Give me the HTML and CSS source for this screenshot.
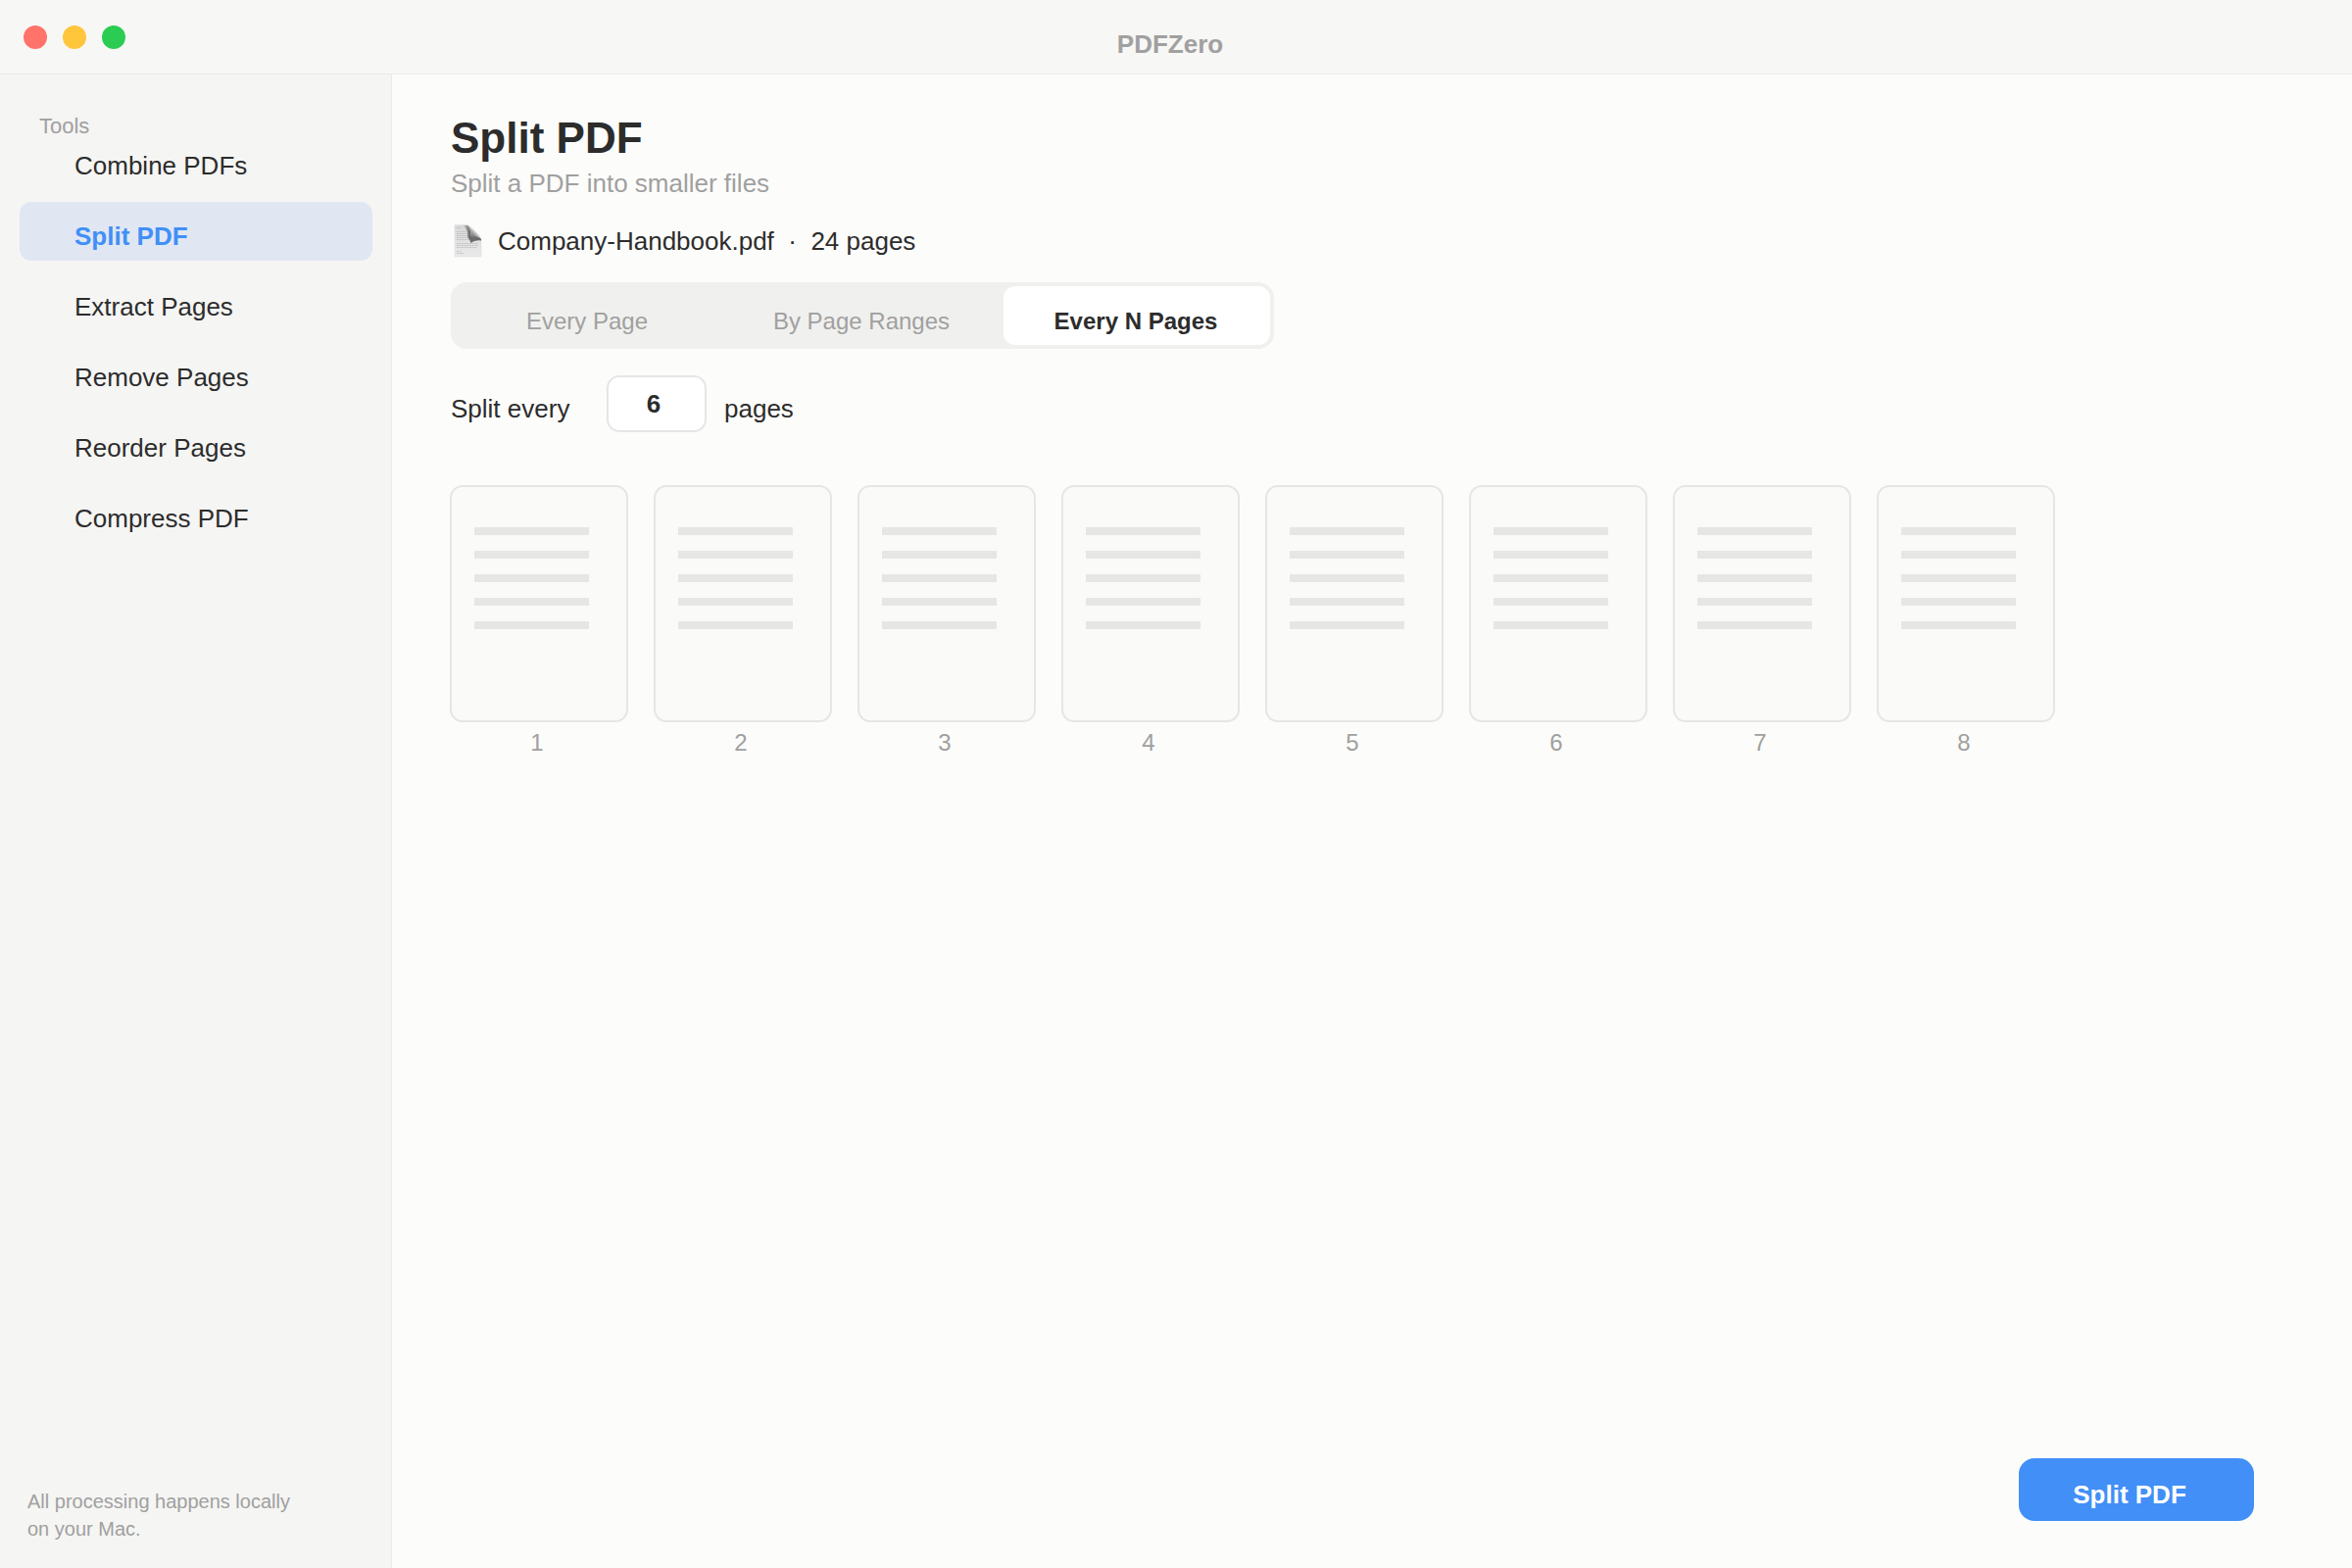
FILE: index.html
```html
<!DOCTYPE html>
<html lang="en">
<head>
<meta charset="utf-8">
<title>PDFZero</title>
<link rel="stylesheet" href="styles.css">
</head>
<body>

<header class="titlebar">
  <div class="lights">
    <span class="light red"></span>
    <span class="light yellow"></span>
    <span class="light green"></span>
  </div>
  <div class="app-name">PDFZero</div>
</header>

<div class="window">

  <aside class="sidebar">
    <h2 class="tools-label">Tools</h2>
    <nav class="tools">
      <a class="tool" href="#combine">Combine PDFs</a>
      <a class="tool active" href="#split">Split PDF</a>
      <a class="tool" href="#extract">Extract Pages</a>
      <a class="tool" href="#remove">Remove Pages</a>
      <a class="tool" href="#reorder">Reorder Pages</a>
      <a class="tool" href="#compress">Compress PDF</a>
    </nav>
    <p class="note">All processing happens locally<br>on your Mac.</p>
  </aside>

  <main class="content">
    <h1>Split PDF</h1>
    <p class="subtitle">Split a PDF into smaller files</p>

    <div class="file">
      <svg class="file-icon" viewBox="0 0 35 34" aria-hidden="true">
        <defs>
          <linearGradient id="sheet" x1="0" y1="0" x2="0" y2="1">
            <stop offset="0" stop-color="#d9d9d9"/>
            <stop offset="1" stop-color="#eaeaea"/>
          </linearGradient>
          <linearGradient id="shade" x1="0" y1="0" x2="1" y2="0">
            <stop offset="0" stop-color="#666" stop-opacity="0"/>
            <stop offset="1" stop-color="#555"/>
          </linearGradient>
          <linearGradient id="curl" x1="0" y1="1" x2="1" y2="0">
            <stop offset="0" stop-color="#555"/>
            <stop offset="0.35" stop-color="#8c8c8c"/>
            <stop offset="0.6" stop-color="#e4e4e4"/>
            <stop offset="1" stop-color="#f4f4f4"/>
          </linearGradient>
        </defs>
        <path d="M4 .5H17C20 2 29 10 31 15V33H4z" fill="url(#sheet)" stroke="#dedede" stroke-width=".6"/>
        <path d="M12 1H17Q21 3 20.500 18L17 13Q18 5 12 1z" fill="url(#shade)"/>
        <path d="M20 12Q27 11 31 15V16.500Q25 15.500 20 19z" fill="#6c6c6c"/>
        <path d="M16.500 .5Q21 3 20.500 14Q26 10 31 14.500Q28 10 16.500 .5z" fill="url(#curl)"/>
        <g stroke="#bcbcbc" stroke-width=".8" stroke-dasharray="2 .6">
          <path d="M6 3.500H11M6 7.500H16M6 9.500H17M6 11.500H17M6 13.500H17M6 15.500H18M6 19.500H28M6 21.500H28M6 23.500H27M6 27.500H11M6 29.500H14"/>
        </g>
      </svg>
      <span>Company-Handbook.pdf&nbsp; ·&nbsp; 24 pages</span>
    </div>

    <div class="modes">
      <button class="mode" type="button">Every Page</button>
      <button class="mode" type="button">By Page Ranges</button>
      <button class="mode selected" type="button">Every N Pages</button>
    </div>

    <div class="every">
      <label class="every-label" for="count">Split every</label>
      <input class="every-input" id="count" type="text" inputmode="numeric" value="6">
      <span class="every-unit">pages</span>
    </div>

    <div class="pages">
      <div class="page"><div class="sheet"><i></i><i></i><i></i><i></i><i></i></div><span>1</span></div>
      <div class="page"><div class="sheet"><i></i><i></i><i></i><i></i><i></i></div><span>2</span></div>
      <div class="page"><div class="sheet"><i></i><i></i><i></i><i></i><i></i></div><span>3</span></div>
      <div class="page"><div class="sheet"><i></i><i></i><i></i><i></i><i></i></div><span>4</span></div>
      <div class="page"><div class="sheet"><i></i><i></i><i></i><i></i><i></i></div><span>5</span></div>
      <div class="page"><div class="sheet"><i></i><i></i><i></i><i></i><i></i></div><span>6</span></div>
      <div class="page"><div class="sheet"><i></i><i></i><i></i><i></i><i></i></div><span>7</span></div>
      <div class="page"><div class="sheet"><i></i><i></i><i></i><i></i><i></i></div><span>8</span></div>
    </div>

    <button class="split-button" type="button">Split PDF</button>
  </main>

</div>

</body>
</html>
```
FILE: styles.css
```css
* {
  box-sizing: border-box;
}

body {
  margin: 0;
  min-height: 100vh;
  display: flex;
  flex-direction: column;
  background: #fcfcfa;
  color: #2c2c2c;
  font-family: "Helvetica Neue", "Liberation Sans", Arial, sans-serif;
  font-size: 26px;
  line-height: 30px;
}

h1, h2, p {
  margin: 0;
}

button, input {
  font: inherit;
  color: inherit;
}

/* title bar */

.titlebar {
  display: grid;
  grid-template-columns: 1fr auto 1fr;
  align-items: center;
  height: 76px;
  padding: 0 36px 0 24px;
  background: #f7f7f5;
  border-bottom: 1px solid #ebebe9;
}

.lights {
  display: flex;
  gap: 16px;
}

.light {
  width: 24px;
  height: 24px;
  border-radius: 50%;
}

.red {
  background: #ff736a;
}

.yellow {
  background: #ffc63c;
}

.green {
  background: #2acd52;
}

.app-name {
  padding-top: 14px;
  color: #a0a0a0;
  font-weight: bold;
}

.window {
  flex: 1;
  display: flex;
}

/* sidebar */

.sidebar {
  display: flex;
  flex-direction: column;
  flex: 0 0 400px;
  padding: 40px 19px 26px 20px;
  background: #f5f5f3;
  border-right: 1px solid #ebebe9;
}

.tools-label {
  margin-bottom: -8px;
  padding-left: 20px;
  color: #a0a0a0;
  font-size: 22px;
  font-weight: normal;
  line-height: 26px;
}

.tools {
  display: flex;
  flex-direction: column;
  gap: 12px;
}

.tool {
  height: 60px;
  padding: 10px 0 0 56px;
  border-radius: 12px;
  color: inherit;
  line-height: 50px;
  text-decoration: none;
}

.tool.active {
  background: #e0e7f3;
  color: #418ff7;
  font-weight: bold;
}

.note {
  margin-top: auto;
  padding-left: 8px;
  color: #a0a0a0;
  font-size: 20px;
  line-height: 28px;
}

/* main column */

.content {
  flex: 1;
  display: flex;
  flex-direction: column;
  align-items: flex-start;
  padding: 40px 100px 48px 60px;
}

h1 {
  font-size: 44px;
  line-height: 50px;
}

.subtitle {
  margin-top: 6px;
  color: #a0a0a0;
}

.file {
  display: flex;
  align-items: center;
  gap: 13px;
  margin-top: 27px;
}

.file-icon {
  width: 35px;
  height: 34px;
}

.modes {
  display: grid;
  grid-template-columns: repeat(3, 272px);
  gap: 8px;
  margin-top: 25px;
  padding: 4px;
  border-radius: 16px;
  background: #f0f0ee;
}

.mode {
  height: 60px;
  padding: 12px 2px 0 0;
  border: none;
  border-radius: 12px;
  background: none;
  color: #a0a0a0;
  font-size: 24px;
}

.mode.selected {
  background: #fff;
  color: #2c2c2c;
  font-weight: bold;
}

.every {
  display: flex;
  align-items: center;
  gap: 18px;
  margin-top: 27px;
}

.every-label {
  width: 141px;
  padding-top: 10px;
}

.every-unit {
  padding-top: 10px;
}

.every-input {
  width: 102px;
  height: 58px;
  padding: 0 6px 0 0;
  border: 2px solid #e6e6e4;
  border-radius: 13px;
  background: #fff;
  font-weight: bold;
  text-align: center;
}

.pages {
  display: flex;
  flex-wrap: wrap;
  gap: 26px;
  margin: 54px 0 0 -1px;
}

.page {
  display: flex;
  flex-direction: column;
  gap: 6px;
  color: #a0a0a0;
  font-size: 24px;
  text-align: center;
}

.page span {
  padding-right: 4px;
}

.sheet {
  display: flex;
  flex-direction: column;
  gap: 16px;
  width: 182px;
  height: 242px;
  padding: 41px 23px;
  border: 2px solid #e6e6e4;
  border-radius: 13px;
  background: #fafaf8;
}

/* lines of text on the sheet */
.sheet i {
  width: 117px;
  height: 8px;
  background: #e6e6e4;
}

.split-button {
  align-self: flex-end;
  width: 240px;
  height: 64px;
  margin-top: auto;
  padding: 10px 14px 0 0;
  border: none;
  border-radius: 16px;
  background: #418ff7;
  color: #fff;
  font-weight: bold;
}
```
